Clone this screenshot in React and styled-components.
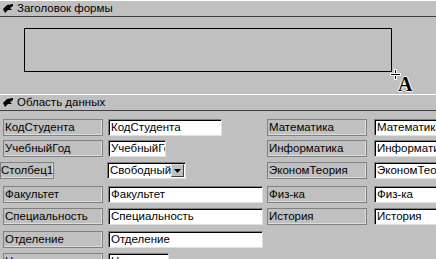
import React from 'react'
import styled, { createGlobalStyle } from 'styled-components'

const Global = createGlobalStyle`
    html, body {
        margin: 0;
        padding: 0;
        background: #c0c0c0;
        overflow: hidden;
    }
`

const Page = styled.div`
    width: 436px;
    height: 259px;
    overflow: hidden;
    background: #c0c0c0;
    font-family: "Liberation Sans", Arial, sans-serif;
    color: #000;
`

const SectionBar = styled.div`
    height: 15px;
    border-top: 1px solid #ffffff;
    border-bottom: 1px solid #404040;
    display: flex;
    align-items: center;
    gap: 3px;
    padding-left: 3px;
    font-size: 11.5px;
    line-height: 15px;
    white-space: nowrap;
`

const HeaderArea = styled.div`
    position: relative;
    height: 77px;
    padding: 11px 0 0 24px;
    box-sizing: border-box;
`

const TitleFrame = styled.div`
    width: 368px;
    height: 44px;
    box-sizing: border-box;
    border: 1px solid #000;
`

const Cursor = styled.div`
    position: absolute;
    left: 391px;
    top: 53px;
    width: 26px;
    height: 24px;
`

const Cross = styled.div`
    position: absolute;
    left: 0;
    top: 0;
    width: 9px;
    height: 9px;
    &::before, &::after {
        content: '';
        position: absolute;
        background: #000;
        box-shadow: 0 0 0 1px #fff;
    }
    &::before { left: 4px; top: 0; width: 1px; height: 9px; }
    &::after { left: 0; top: 4px; width: 9px; height: 1px; }
`

const LetterA = styled.span`
    position: absolute;
    left: 7px;
    top: 4px;
    font-family: "Liberation Serif", "Times New Roman", serif;
    font-weight: bold;
    font-size: 20px;
    line-height: 20px;
    text-shadow: 1px 0 #fff, -1px 0 #fff, 0 1px #fff, 0 -1px #fff;
`

const Detail = styled.div`
    padding-top: 8px;
`

const Row = styled.div`
    display: grid;
    grid-template-columns: 267px 107px 1fr;
    height: 17px;
    margin-top: ${p => p.$gap || 0}px;
`

const Pair = styled.div`
    display: flex;
    align-items: flex-start;
`

const Label = styled.div`
    box-sizing: border-box;
    width: ${p => p.$w || 100}px;
    margin-left: ${p => p.$ml ?? 3}px;
    height: 17px;
    border: 1px solid #808080;
    box-shadow: inset -1px -1px 0 #dcdcdc;
    font-size: 11.5px;
    line-height: 15px;
    padding-left: ${p => p.$pl ?? 1}px;
    white-space: nowrap;
    overflow: hidden;
`

const Field = styled.div`
    box-sizing: border-box;
    width: ${p => p.$w}px;
    margin-left: ${p => p.$ml ?? 0}px;
    height: 17px;
    background: #fff;
    border-top: 1px solid #808080;
    border-left: 1px solid #808080;
    border-right: 1px solid #dfdfdf;
    border-bottom: 1px solid #dfdfdf;
    box-shadow: inset 1px 1px 0 #000;
    font-size: 11.5px;
    line-height: 15px;
    padding-left: 2px;
    white-space: nowrap;
    overflow: hidden;
`

const Combo = styled(Field)`
    display: flex;
    padding-right: 1px;
`

const ComboText = styled.span`
    flex: 1;
    overflow: hidden;
`

const DropButton = styled.div`
    flex: none;
    width: 13px;
    height: 13px;
    margin-top: 1px;
    box-sizing: border-box;
    background: #c0c0c0;
    border-top: 1px solid #dfdfdf;
    border-left: 1px solid #dfdfdf;
    border-right: 1px solid #404040;
    border-bottom: 1px solid #404040;
    display: flex;
    align-items: center;
    justify-content: center;
`

function BarIcon() {
    return (
        <svg width="11" height="10" viewBox="0 0 11 10">
            <path d="M10 0 L4 1 L0 5 L2 9 L5 6 L9 6 L7 4 L10 2 Z" fill="#000" />
        </svg>
    )
}

const rows = [
    { label: 'КодСтудента', value: 'КодСтудента', w: 114, gap: 0, right: ['Математика', 'Математика'] },
    { label: 'УчебныйГод', value: 'УчебныйГод', w: 58, gap: 4, right: ['Информатика', 'Информатика'] },
    { label: 'Столбец1', combo: 'Свободный', gap: 5, right: ['ЭкономТеория', 'ЭкономТеория'] },
    { label: 'Факультет', value: 'Факультет', w: 155, gap: 7, right: ['Физ-ка', 'Физ-ка'] },
    { label: 'Специальность', value: 'Специальность', w: 155, gap: 5, right: ['История', 'История'] },
    { label: 'Отделение', value: 'Отделение', w: 155, gap: 6 },
    { label: 'Номер', value: 'Номер', w: 61, gap: 5 },
]

export default function App() {
    return (
        <Page>
            <Global />
            <SectionBar><BarIcon />Заголовок формы</SectionBar>
            <HeaderArea>
                <TitleFrame />
                <Cursor>
                    <Cross />
                    <LetterA>A</LetterA>
                </Cursor>
            </HeaderArea>
            <SectionBar><BarIcon />Область данных</SectionBar>
            <Detail>
                {rows.map(r => (
                    <Row key={r.label} $gap={r.gap}>
                        {r.combo ? (
                            <Pair>
                                <Label $w={54} $ml={0} $pl={0}>{r.label}</Label>
                                <Combo $w={79} $ml={53}>
                                    <ComboText>{r.combo}</ComboText>
                                    <DropButton>
                                        <svg width="7" height="4" viewBox="0 0 7 4"><path d="M0 0 H7 L3.5 4 Z" fill="#000" /></svg>
                                    </DropButton>
                                </Combo>
                            </Pair>
                        ) : (
                            <Pair>
                                <Label>{r.label}</Label>
                                <Field $w={r.w} $ml={5}>{r.value}</Field>
                            </Pair>
                        )}
                        {r.right && <Label $ml={0}>{r.right[0]}</Label>}
                        {r.right && <Field $w={100}>{r.right[1]}</Field>}
                    </Row>
                ))}
            </Detail>
        </Page>
    )
}
